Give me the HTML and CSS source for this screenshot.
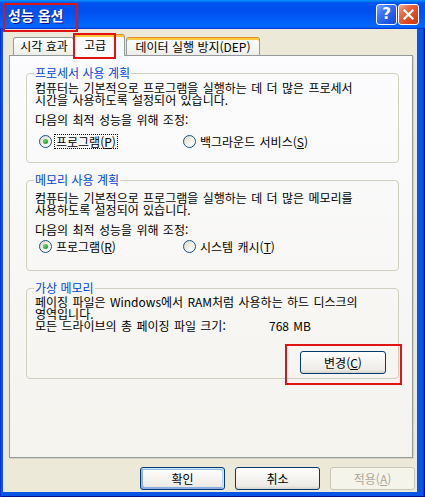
FILE: index.html
```html
<!DOCTYPE html>
<html lang="ko">
<head>
<meta charset="utf-8">
<title>성능 옵션</title>
<link rel="stylesheet" href="styles.css">
</head>
<body>
<div class="window">
  <div class="titlebar">
    <span class="title">성능 옵션</span>
    <div class="tb-buttons">
      <span class="tb-btn tb-help">?</span>
      <span class="tb-btn tb-close"><svg width="13" height="13" viewBox="0 0 13 13"><path d="M2.5 2.5 L10.5 10.5 M10.5 2.5 L2.5 10.5" stroke="#fff" stroke-width="2.2" stroke-linecap="square" fill="none"/></svg></span>
    </div>
  </div>
  <div class="frame">
    <div class="client">
      <div class="tabs">
        <div class="tab tab-visual">시각 효과</div>
        <div class="tab tab-active">고급</div>
        <div class="tab tab-hot">데이터 실행 방지(DEP)</div>
      </div>
      <div class="panel">
        <fieldset class="group g-cpu">
          <legend>프로세서 사용 계획</legend>
          <p class="desc">컴퓨터는 기본적으로 프로그램을 실행하는 데 더 많은 프로세서<br>시간을 사용하도록 설정되어 있습니다.</p>
          <p class="line adjust">다음의 최적 성능을 위해 조정:</p>
          <div class="radios">
            <label class="radio"><span class="radio-dot checked"></span><span class="radio-text focus">프로그램(<u>P</u>)</span></label>
            <label class="radio"><span class="radio-dot"></span><span class="radio-text">백그라운드 서비스(<u>S</u>)</span></label>
          </div>
        </fieldset>
        <fieldset class="group g-mem">
          <legend>메모리 사용 계획</legend>
          <p class="desc">컴퓨터는 기본적으로 프로그램을 실행하는 데 더 많은 메모리를<br>사용하도록 설정되어 있습니다.</p>
          <p class="line adjust">다음의 최적 성능을 위해 조정:</p>
          <div class="radios">
            <label class="radio"><span class="radio-dot checked"></span><span class="radio-text">프로그램(<u>R</u>)</span></label>
            <label class="radio"><span class="radio-dot"></span><span class="radio-text">시스템 캐시(<u>T</u>)</span></label>
          </div>
        </fieldset>
        <fieldset class="group g-vm">
          <legend>가상 메모리</legend>
          <p class="desc">페이징 파일은 Windows에서 RAM처럼 사용하는 하드 디스크의<br>영역입니다.</p>
          <div class="line size-row"><span class="size-label">모든 드라이브의 총 페이징 파일 크기:</span><span class="size-value">768 MB</span></div>
          <div class="change-row"><button class="btn btn-change" type="button">변경(<u>C</u>)</button></div>
        </fieldset>
      </div>
      <div class="actions">
        <button class="btn btn-default" type="button">확인</button>
        <button class="btn" type="button">취소</button>
        <button class="btn btn-disabled" type="button">적용(<u>A</u>)</button>
      </div>
    </div>
  </div>
  <div class="mark mark-title"></div>
  <div class="mark mark-tab"></div>
  <div class="mark mark-change"></div>
</div>
</body>
</html>
```

FILE: styles.css
```css
* { box-sizing: border-box; }
html, body { margin: 0; padding: 0; }
body {
  width: 425px;
  height: 497px;
  overflow: hidden;
  background: #ffffff;
  font-family: "Noto Sans CJK KR", "Noto Sans", sans-serif;
  font-size: 12px;
  color: #000;
}

.window {
  position: relative;
  width: 425px;
  height: 497px;
  display: flex;
  flex-direction: column;
  background: #0a55e6;
  box-shadow: inset 1px 0 #0831d9, inset -1px 0 #00138c, inset 0 -1px #00138c, inset -2px 0 #0a3fc8;
}

.titlebar {
  flex: none;
  height: 29px;
  display: flex;
  align-items: center;
  justify-content: space-between;
  padding: 0 6px 0 8px;
  background: linear-gradient(180deg, #0997ff, #0053ee 10%, #0050ee 40%, #0066ff 86%, #0066ff 92%, #005bff 95%, #003dd7 97%, #003dd7);
}

.title {
  color: #fff;
  font-weight: bold;
  font-size: 14px;
  line-height: 16px;
  text-shadow: 1px 1px #0f1089;
}

.tb-buttons { display: flex; gap: 1px; }
.tb-btn {
  width: 21px;
  height: 21px;
  border: 1px solid #fff;
  border-radius: 3px;
  display: flex;
  align-items: center;
  justify-content: center;
  color: #fff;
}
.tb-help {
  background: linear-gradient(135deg, #78a6ff 0%, #3c74f2 35%, #2159e6 70%, #1a48d0 100%);
  font-family: "DejaVu Sans", sans-serif;
  font-weight: bold;
  font-size: 15px;
  line-height: 15px;
}
.tb-close {
  background: linear-gradient(135deg, #f7a58c 0%, #e6673f 35%, #d9461c 70%, #c23a16 100%);
}

.frame {
  flex: 1;
  display: flex;
  padding: 0 8px 5px 3px;
}
.client {
  flex: 1;
  background: #ece9d8;
  display: flex;
  flex-direction: column;
}

/* tabs */
.tabs {
  flex: none;
  height: 26px;
  display: flex;
  align-items: flex-end;
  padding-left: 10px;
  position: relative;
  z-index: 2;
}
.tab {
  height: 18px;
  border: 1px solid #919b9c;
  border-bottom: none;
  border-radius: 3px 3px 0 0;
  background: linear-gradient(180deg, #ffffff, #fafaf9 30%, #f0f0ea 90%, #ecebe6);
  line-height: 16px;
  text-align: center;
  white-space: nowrap;
}
.tab-visual { width: 61px; padding-left: 1px; }
.tab-active {
  width: 52px;
  height: 22px;
  margin-left: -1px;
  margin-bottom: -1px;
  padding-right: 8px;
  background: #fcfcfe;
  border-top: 1px solid #e68b2c;
  box-shadow: inset 0 2px #ffc73c;
  line-height: 20px;
}
.tab-hot {
  width: 134px;
  margin-left: 1px;
  border-top: 1px solid #e68b2c;
  box-shadow: inset 0 2px #ffc73c;
  line-height: 17px;
}

/* panel */
.panel {
  flex: none;
  margin-left: 6px;
  width: 404px;
  height: 403px;
  border: 1px solid #919b9c;
  background: linear-gradient(180deg, #fcfcfe, #f4f3ee);
  box-shadow: 1px 1px 0 #d6d2c2;
  padding: 11px 13px 0 16px;
  position: relative;
  z-index: 1;
}

.group {
  margin: 0;
  min-width: 0;
  border: 1px solid #d0d0bf;
  border-radius: 4px;
  padding: 3px 8px 13px 8px;
}
.group + .group { margin-top: 11px; }
.group legend {
  padding: 0 1px;
  margin-left: -1px;
  color: #0046d5;
  font-size: 12px;
  line-height: 12px;
}
.desc {
  margin: 0;
  line-height: 12px;
  word-spacing: 1px;
  white-space: nowrap;
}
.line {
  margin: 0;
  line-height: 12px;
  word-spacing: 1px;
}
.adjust { margin-top: 8px; }

.radios {
  display: flex;
  height: 15px;
  align-items: center;
  padding-left: 4px;
  margin-top: 8px;
}
.radio {
  display: flex;
  align-items: center;
  height: 15px;
}
.radio:first-child { width: 144px; }
.radio-dot {
  width: 13px;
  height: 13px;
  border: 1px solid #1c5180;
  border-radius: 50%;
  background: linear-gradient(135deg, #dcd9c5, #ffffff 80%);
  display: flex;
  align-items: center;
  justify-content: center;
  flex: none;
}
.radio-dot.checked::after {
  content: "";
  width: 5px;
  height: 5px;
  border-radius: 50%;
  background: radial-gradient(circle at 35% 35%, #6bd66a, #21a121 70%);
}
.radio-text {
  line-height: 13px;
  word-spacing: 1px;
  padding: 0 1px;
  border: 1px solid transparent;
  margin-left: 2px;
}
.radio-text.focus { border: 1px dotted #000; }
u { text-underline-offset: 1px; }

.g-mem { padding-top: 6px; padding-bottom: 16px; }
.g-mem .radios { margin-top: 3px; }

.g-vm { padding-top: 2px; padding-bottom: 4px; }
.size-row { display: flex; margin-top: 0; }
.size-label { width: 234px; }
.change-row {
  display: flex;
  justify-content: flex-end;
  margin-top: 19px;
  padding-right: 4px;
}

/* buttons */
.btn {
  font-family: "Noto Sans CJK KR", "Noto Sans", sans-serif;
  font-size: 12px;
  color: #000;
  height: 23px;
  padding: 0;
  border: 1px solid #003c74;
  border-radius: 3px;
  background: linear-gradient(180deg, #ffffff, #ecebe6 86%, #d6d0c5);
  line-height: 19px;
}
.btn-change { width: 86px; }
.btn-default {
  box-shadow: inset -1px 1px #cee7ff, inset 1px 2px #98b8ea, inset -2px 2px #bcd4f6, inset 1px -1px #89ade4, inset 2px -2px #89ade4;
}
.btn-disabled {
  color: #aca899;
  border-color: #c9c7ba;
  background: #f5f4ea;
}

.actions {
  flex: none;
  display: flex;
  justify-content: flex-end;
  gap: 10px;
  margin-top: 9px;
  padding-right: 2px;
}
.actions .btn { width: 85px; }

/* red annotation boxes */
.mark {
  position: absolute;
  border: 2px solid #e01414;
  z-index: 5;
}
.mark-title { left: 3px; top: 3px; width: 75px; height: 29px; }
.mark-tab { left: 73px; top: 33px; width: 43px; height: 26px; }
.mark-change { left: 285px; top: 344px; width: 117px; height: 41px; }
```
